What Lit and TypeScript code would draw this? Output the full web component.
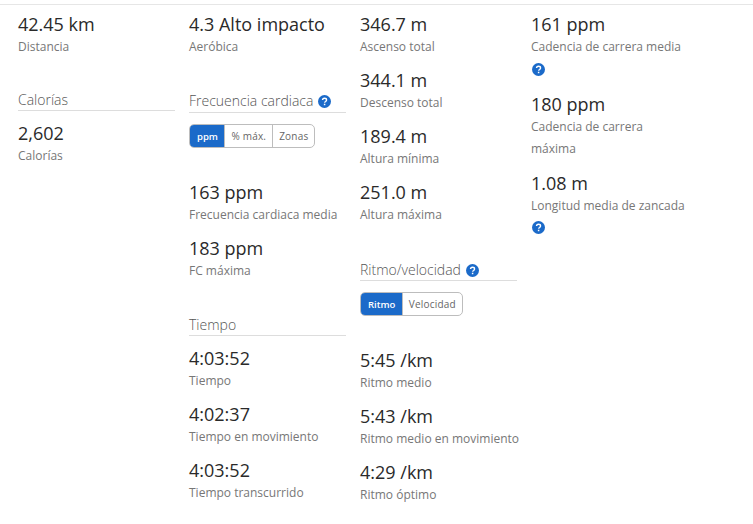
import { LitElement, html, css } from "lit";
import { customElement } from "lit/decorators.js";

const help = html`<svg class="help" viewBox="0 0 14 14" width="13" height="13" aria-hidden="true"><circle cx="7" cy="7" r="7" fill="#1b6ac9"></circle><path d="M4.9 5.5c0-1.3 1-2 2.2-2s2.1.7 2.1 1.8c0 .9-.5 1.3-1.1 1.7-.5.3-.8.6-.8 1.1v.2" fill="none" stroke="#fff" stroke-width="1.5"></path><rect x="6.3" y="9.4" width="1.6" height="1.6" fill="#fff"></rect></svg>`;

const stat = (v: string, l: unknown) => html`<div class="stat"><div class="value">${v}</div><div class="label">${l}</div></div>`;
const head = (t: string, h = false) => html`<div class="head"><span>${t}</span>${h ? help : ""}</div>`;
const seg = (items: string[]) => html`<div class="seg">${items.map((x, i) => html`<span class=${i === 0 ? "on" : ""}>${x}</span>`)}</div>`;

@customElement("app-root")
export class AppRoot extends LitElement {
  static styles = css`
    :host { display: block; width: 753px; height: 524px; overflow: hidden; background: #fff; font-family: "Open Sans", sans-serif; color: #2a2a2a; }
    .page { border-top: 1px solid #e6e6e6; margin-top: 4px; padding: 7px 0 0 18px; display: grid; grid-template-columns: 157px 157px 157px 190px; column-gap: 14px; align-items: start; }
    .stat { margin-bottom: 10px; }
    .value { font-size: 18px; line-height: 24px; font-weight: 370; }
    .label { font-size: 12px; line-height: 22px; color: #777; white-space: nowrap; }
    .help { display: block; flex: none; }
    .helpline { display: flex; align-items: center; height: 22px; padding-left: 1px; }
    .helpline.up { margin-top: -1px; }
    .head { display: flex; align-items: center; gap: 5px; font-size: 14px; font-weight: 300; color: #555; line-height: 20px; border-bottom: 1px solid #ddd; }
    .c1 .sec { margin-top: 32px; }
    .c1 .head { margin-bottom: 10px; }
    .c2 .sec { margin-top: 33px; }
    .c2 .sec .head { padding-bottom: 1px; }
    .seg { display: flex; width: fit-content; margin-top: 11px; height: 24px; border: 1px solid #bdbdbd; border-radius: 5px; box-sizing: border-box; overflow: hidden; font-size: 10px; letter-spacing: 0.2px; color: #666; }
    .seg span { display: flex; align-items: center; padding: 0 6px; border-left: 1px solid #bdbdbd; }
    .seg span:first-child { border-left: 0; }
    .seg .on { background: #1b6ac9; color: #fff; font-size: 9.5px; letter-spacing: 0; font-weight: 600; margin: -1px 0 -1px -1px; padding: 0 6.5px 0 8px; }
    .seg-wrap { margin-bottom: 32px; }
    .gap { margin-top: 34px; }
    .t-head { margin-top: 33px; margin-bottom: 10px; }
    .c4 .first { margin-bottom: 12px; }
    .c4 .second { margin-bottom: 11px; }
  `;

  render() {
    return html`<div class="page">
      <div class="c1">
        ${stat("42.45 km", "Distancia")}
        <div class="sec">${head("Calorías")}${stat("2,602", "Calorías")}</div>
      </div>
      <div class="c2">
        ${stat("4.3 Alto impacto", "Aeróbica")}
        <div class="sec">${head("Frecuencia cardiaca", true)}<div class="seg-wrap">${seg(["ppm", "% máx.", "Zonas"])}</div></div>
        ${stat("163 ppm", "Frecuencia cardiaca media")}
        ${stat("183 ppm", "FC máxima")}
        <div class="t-head">${head("Tiempo")}</div>
        ${stat("4:03:52", "Tiempo")}
        ${stat("4:02:37", "Tiempo en movimiento")}
        ${stat("4:03:52", "Tiempo transcurrido")}
      </div>
      <div class="c3">
        ${stat("346.7 m", "Ascenso total")}
        ${stat("344.1 m", "Descenso total")}
        ${stat("189.4 m", "Altura mínima")}
        ${stat("251.0 m", "Altura máxima")}
        <div class="gap">${head("Ritmo/velocidad", true)}</div>
        <div class="seg-wrap">${seg(["Ritmo", "Velocidad"])}</div>
        ${stat("5:45 /km", "Ritmo medio")}
        ${stat("5:43 /km", "Ritmo medio en movimiento")}
        ${stat("4:29 /km", "Ritmo óptimo")}
      </div>
      <div class="c4">
        <div class="first">${stat("161 ppm", html`Cadencia de carrera media<div class="helpline">${help}</div>`)}</div>
        <div class="second">${stat("180 ppm", html`Cadencia de carrera<br />máxima`)}</div>
        ${stat("1.08 m", html`Longitud media de zancada<div class="helpline up">${help}</div>`)}
      </div>
    </div>`;
  }
}
